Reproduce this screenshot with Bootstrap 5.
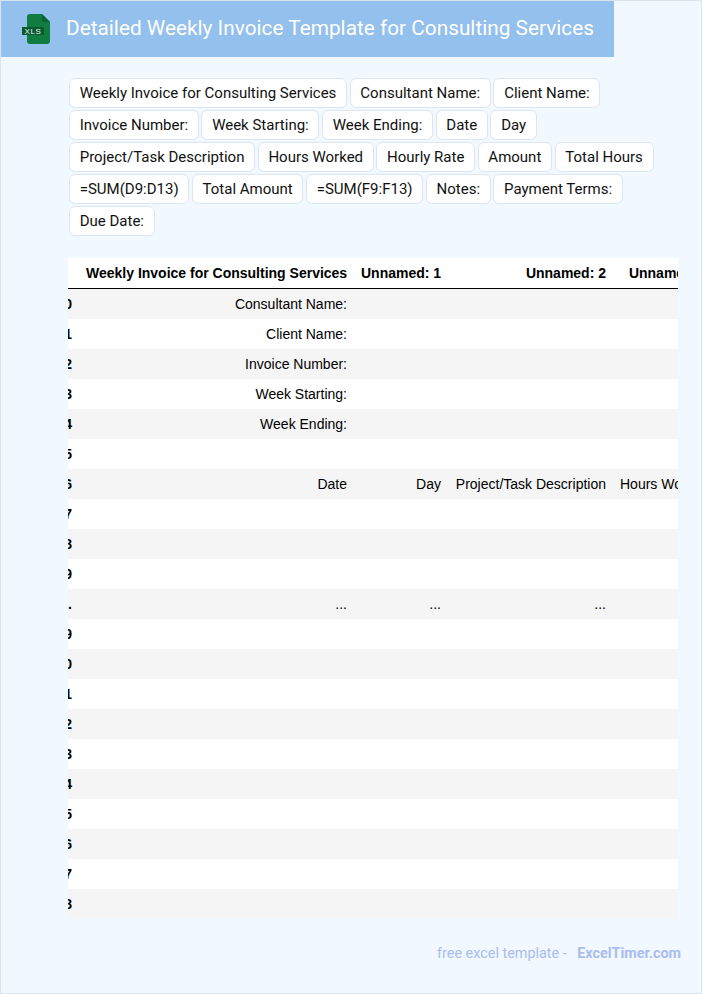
<!DOCTYPE html>
<html lang="en">
<head>
<meta charset="utf-8">
<title>Detailed Weekly Invoice Template for Consulting Services</title>
<link rel="stylesheet" href="https://cdn.jsdelivr.net/npm/bootstrap@5.3.0/dist/css/bootstrap.min.css">
<style>
html,body{height:100%}
body{background:#f1f8ff;font-family:Roboto,sans-serif;color:#000;overflow:hidden}
.page-frame{height:994px;border:1px solid #dbe5f0;overflow:hidden}
.title-band{width:613px;height:56px;background:#93c0ec;padding:0 0 2px 20px;gap:15px}
.title-band svg{margin-top:2px}
.title-text{font-size:20.8px;font-weight:400;color:#fff;margin:0;line-height:1;white-space:nowrap}
.body-area{padding:21px 23px 0 67px}
.tag-wrap{gap:2px 2.6px;margin:0 0 22px 1px}
.tag-item{height:30px;line-height:28px;padding:0 9.7px;background:#fff;border:1px solid #dce6f2;border-radius:6px;font-size:15px;white-space:nowrap;color:#111}
.table-clip{overflow:hidden;width:610px}
.data-grid{table-layout:fixed;border-collapse:separate;border-spacing:0;width:677px;margin-left:-29px;font-family:"Liberation Sans",Arial,sans-serif;font-size:14px;line-height:16px;background:#fff}
.data-grid th,.data-grid td{height:30px;padding:0 7px;text-align:right;vertical-align:middle;white-space:nowrap;color:#000}
.data-grid thead th{font-weight:700;border-bottom:1px solid #000;height:31px}
.data-grid tbody th{font-weight:700}
.data-grid tbody tr:nth-child(odd){background:#f5f5f5}
.foot-line{padding:24px 0 0 0;margin-right:-3px;font-size:14.4px;color:#a9bdf0;gap:10.5px}
.foot-line b{font-weight:700}
</style>
</head>
<body>
<div class="page-frame">
  <div class="title-band d-flex align-items-center">
    <svg width="30" height="32" viewBox="0 0 30 32" aria-hidden="true">
      <path d="M9 1H21L29 9V28a3 3 0 0 1-3 3H9a3 3 0 0 1-3-3V4a3 3 0 0 1 3-3Z" fill="#107c41"/>
      <path d="M21 1L29 9H23a2 2 0 0 1-2-2Z" fill="#0c6334"/>
      <rect x="1" y="14" width="22" height="8" fill="#0a5a30"/>
      <text x="12" y="21" text-anchor="middle" font-family="Liberation Sans, sans-serif" font-size="8" letter-spacing=".6" fill="#e6f4ec">XLS</text>
    </svg>
    <h1 class="title-text">Detailed Weekly Invoice Template for Consulting Services</h1>
  </div>
  <div class="body-area">
    <div class="tag-wrap d-flex flex-wrap">
      <span class="tag-item">Weekly Invoice for Consulting Services</span>
      <span class="tag-item">Consultant Name:</span>
      <span class="tag-item">Client Name:</span>
      <span class="tag-item">Invoice Number:</span>
      <span class="tag-item">Week Starting:</span>
      <span class="tag-item">Week Ending:</span>
      <span class="tag-item">Date</span>
      <span class="tag-item">Day</span>
      <span class="tag-item">Project/Task Description</span>
      <span class="tag-item">Hours Worked</span>
      <span class="tag-item">Hourly Rate</span>
      <span class="tag-item">Amount</span>
      <span class="tag-item">Total Hours</span>
      <span class="tag-item">=SUM(D9:D13)</span>
      <span class="tag-item">Total Amount</span>
      <span class="tag-item">=SUM(F9:F13)</span>
      <span class="tag-item">Notes:</span>
      <span class="tag-item">Payment Terms:</span>
      <span class="tag-item">Due Date:</span>
    </div>
    <div class="table-clip">
      <table class="data-grid">
        <colgroup><col style="width:40px"><col style="width:275px"><col style="width:94px"><col style="width:165px"><col style="width:103px"></colgroup>
        <thead><tr><th></th><th>Weekly Invoice for Consulting Services</th><th>Unnamed: 1</th><th>Unnamed: 2</th><th>Unnamed: 3</th></tr></thead>
        <tbody>
          <tr><th>10</th><td>Consultant Name:</td><td></td><td></td><td></td></tr>
          <tr><th>11</th><td>Client Name:</td><td></td><td></td><td></td></tr>
          <tr><th>12</th><td>Invoice Number:</td><td></td><td></td><td></td></tr>
          <tr><th>13</th><td>Week Starting:</td><td></td><td></td><td></td></tr>
          <tr><th>14</th><td>Week Ending:</td><td></td><td></td><td></td></tr>
          <tr><th>15</th><td></td><td></td><td></td><td></td></tr>
          <tr><th>16</th><td>Date</td><td>Day</td><td>Project/Task Description</td><td>Hours Worked</td></tr>
          <tr><th>17</th><td></td><td></td><td></td><td></td></tr>
          <tr><th>18</th><td></td><td></td><td></td><td></td></tr>
          <tr><th>19</th><td></td><td></td><td></td><td></td></tr>
          <tr><th>...</th><td>...</td><td>...</td><td>...</td><td></td></tr>
          <tr><th>29</th><td></td><td></td><td></td><td></td></tr>
          <tr><th>30</th><td></td><td></td><td></td><td></td></tr>
          <tr><th>31</th><td></td><td></td><td></td><td></td></tr>
          <tr><th>32</th><td></td><td></td><td></td><td></td></tr>
          <tr><th>33</th><td></td><td></td><td></td><td></td></tr>
          <tr><th>34</th><td></td><td></td><td></td><td></td></tr>
          <tr><th>35</th><td></td><td></td><td></td><td></td></tr>
          <tr><th>36</th><td></td><td></td><td></td><td></td></tr>
          <tr><th>37</th><td></td><td></td><td></td><td></td></tr>
          <tr><th>38</th><td></td><td></td><td></td><td></td></tr>
        </tbody>
      </table>
    </div>
    <div class="foot-line d-flex justify-content-end"><span>free excel template -</span><b>ExcelTimer.com</b></div>
  </div>
</div>
<script src="https://cdn.jsdelivr.net/npm/bootstrap@5.3.0/dist/js/bootstrap.bundle.min.js"></script>
</body>
</html>
